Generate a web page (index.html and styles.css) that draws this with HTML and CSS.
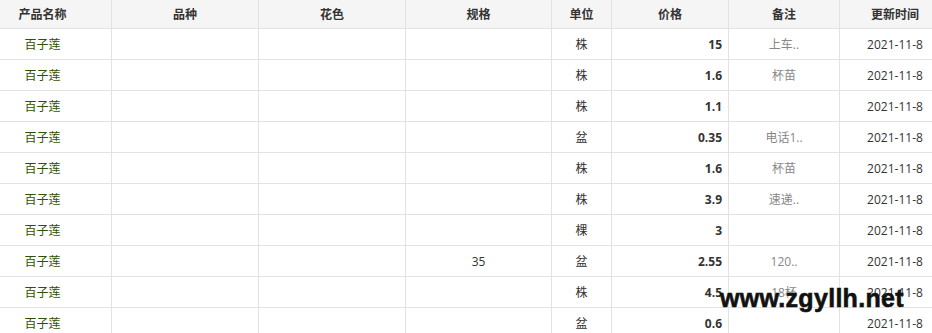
FILE: index.html
```html
<!DOCTYPE html>
<html lang="zh">
<head>
  <meta charset="UTF-8" />
  <title>报价列表</title>
  <link rel="stylesheet" href="styles.css">
</head>
<body>
  <div class="wrap">
    <table class="price-table">
      <colgroup>
        <col class="c-name">
        <col class="c-kind">
        <col class="c-color">
        <col class="c-spec">
        <col class="c-unit">
        <col class="c-price">
        <col class="c-note">
        <col class="c-date">
      </colgroup>
      <thead>
        <tr>
          <th>产品名称</th>
          <th>品种</th>
          <th>花色</th>
          <th>规格</th>
          <th>单位</th>
          <th>价格</th>
          <th>备注</th>
          <th>更新时间</th>
        </tr>
      </thead>
      <tbody>
        <tr><td class="name">百子莲</td><td></td><td></td><td></td><td>株</td><td class="price">15</td><td class="note">上车..</td><td>2021-11-8</td></tr>
        <tr><td class="name">百子莲</td><td></td><td></td><td></td><td>株</td><td class="price">1.6</td><td class="note">杯苗</td><td>2021-11-8</td></tr>
        <tr><td class="name">百子莲</td><td></td><td></td><td></td><td>株</td><td class="price">1.1</td><td class="note"></td><td>2021-11-8</td></tr>
        <tr><td class="name">百子莲</td><td></td><td></td><td></td><td>盆</td><td class="price">0.35</td><td class="note">电话1..</td><td>2021-11-8</td></tr>
        <tr><td class="name">百子莲</td><td></td><td></td><td></td><td>株</td><td class="price">1.6</td><td class="note">杯苗</td><td>2021-11-8</td></tr>
        <tr><td class="name">百子莲</td><td></td><td></td><td></td><td>株</td><td class="price">3.9</td><td class="note">速递..</td><td>2021-11-8</td></tr>
        <tr><td class="name">百子莲</td><td></td><td></td><td></td><td>棵</td><td class="price">3</td><td class="note"></td><td>2021-11-8</td></tr>
        <tr><td class="name">百子莲</td><td></td><td></td><td>35</td><td>盆</td><td class="price">2.55</td><td class="note">120..</td><td>2021-11-8</td></tr>
        <tr><td class="name">百子莲</td><td></td><td></td><td></td><td>株</td><td class="price">4.5</td><td class="note">18杯</td><td>2021-11-8</td></tr>
        <tr><td class="name">百子莲</td><td></td><td></td><td></td><td>盆</td><td class="price">0.6</td><td class="note"></td><td>2021-11-8</td></tr>
      </tbody>
    </table>
    <div class="watermark">www.zgyllh.net</div>
  </div>
</body>
</html>
```

FILE: styles.css
```css
* {
  box-sizing: border-box;
}
body {
  margin: 0;
  background: #fff;
  font-family: "Open Sans", "Noto Sans CJK SC", sans-serif;
  font-size: 12px;
  color: #333;
}
.wrap {
  position: relative;
  width: 932px;
  height: 333px;
  overflow: hidden;
}
.price-table {
  table-layout: fixed;
  border-collapse: separate;
  border-spacing: 0;
  width: 977px;
  margin-left: -26px;
}
.c-name { width: 138px; }
.c-kind { width: 147px; }
.c-color { width: 147px; }
.c-spec { width: 146px; }
.c-unit { width: 60px; }
.c-price { width: 117px; }
.c-note { width: 111px; }
.c-date { width: 111px; }
th, td {
  border-right: 1px solid #e2e2e2;
  border-bottom: 1px solid #e2e2e2;
  text-align: center;
  padding: 0;
  white-space: nowrap;
  overflow: hidden;
}
th {
  height: 29px;
  background: #f5f5f5;
  font-weight: bold;
  color: #333;
}
td {
  height: 31px;
}
td.name {
  color: #2f5200;
}
td.price {
  text-align: right;
  padding-right: 6px;
  font-weight: bold;
}
td.note {
  color: #888;
}
/* site watermark over the table */
.watermark {
  position: absolute;
  left: 720px;
  top: 286px;
  font-family: "Liberation Sans", sans-serif;
  font-weight: bold;
  font-size: 25px;
  line-height: 25px;
  color: #111;
  letter-spacing: 0.3px;
  -webkit-text-stroke: 0.6px #111;
}
```
